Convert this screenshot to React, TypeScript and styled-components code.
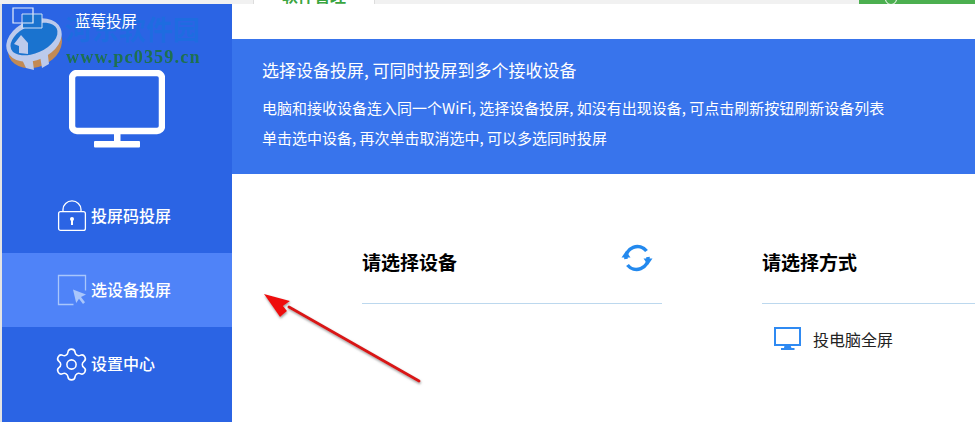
import React from "react";
import styled, { createGlobalStyle } from "styled-components";
import { Settings } from "lucide-react";

const GlobalStyle = createGlobalStyle`
  html, body {
    margin: 0;
    padding: 0;
    background: #fff;
    font-family: "Noto Sans CJK SC", "Noto Sans", sans-serif;
  }
`;

const navItems = [
  { key: "code", label: "投屏码投屏" },
  { key: "device", label: "选设备投屏", active: true },
  { key: "settings", label: "设置中心" },
];

const App: React.FC = () => {
  return (
    <Shell>
      <GlobalStyle />
      <TopStrip>
        <StripTab>
          <StripTabText>软件管理</StripTabText>
        </StripTab>
        <StripSpacer />
        <StripButton>
          <StripDot />
        </StripButton>
      </TopStrip>

      <Body>
        <Sidebar>
          <AppTitle>蓝莓投屏</AppTitle>
          <MonitorWrap>
            <svg width="96" height="78" viewBox="0 0 96 78" fill="none">
              <rect x="3" y="3" width="90" height="58" rx="5" stroke="#fff" strokeWidth="6.5" />
              <rect x="45" y="63" width="6.5" height="8" fill="#fff" />
              <rect x="25" y="71" width="46" height="6.5" rx="1" fill="#fff" />
            </svg>
          </MonitorWrap>
          <Nav>
            {navItems.map(item => (
              <NavItem key={item.key} $active={item.active}>
                <NavIcon>
                  {item.key === "code" && <LockIcon />}
                  {item.key === "device" && <PickIcon />}
                  {item.key === "settings" && <Settings size={37} strokeWidth={1} color="#fff" />}
                </NavIcon>
                <NavLabel>{item.label}</NavLabel>
              </NavItem>
            ))}
          </Nav>
        </Sidebar>

        <Main>
          <Banner>
            <BannerTitle>选择设备投屏, 可同时投屏到多个接收设备</BannerTitle>
            <BannerLine>电脑和接收设备连入同一个WiFi, 选择设备投屏, 如没有出现设备, 可点击刷新按钮刷新设备列表</BannerLine>
            <BannerLine>单击选中设备, 再次单击取消选中, 可以多选同时投屏</BannerLine>
          </Banner>

          <Columns>
            <Column>
              <ColumnHead>
                <ColumnTitle>请选择设备</ColumnTitle>
                <RefreshWrap>
                  <RefreshIcon />
                </RefreshWrap>
              </ColumnHead>
            </Column>
            <Column>
              <ColumnHead>
                <ColumnTitle>请选择方式</ColumnTitle>
              </ColumnHead>
              <Option>
                <svg width="28" height="24" viewBox="0 0 28 24" fill="none">
                  <rect x="1" y="1" width="25" height="17" stroke="#2f8af2" strokeWidth="2" />
                  <path d="M10.5 18.5h6l1 2.6h3v1.9H7v-1.9h3z" fill="#2f8af2" />
                </svg>
                <OptionLabel>投电脑全屏</OptionLabel>
              </Option>
            </Column>
          </Columns>
        </Main>
      </Body>

      <WatermarkLogo />
      <WatermarkName>河东软件园</WatermarkName>
      <WatermarkUrl>www.pc0359.cn</WatermarkUrl>
      <RedArrow />
    </Shell>
  );
};

export default App;

const LockIcon = () => (
  <svg width="30" height="32" viewBox="0 0 30 32" fill="none" stroke="#fff" strokeWidth="1.3">
    <rect x="1.6" y="11.6" width="26.8" height="18.8" rx="2" />
    <path d="M6 11.5V9.5a9 8.6 0 0 1 18 0v2" />
    <circle cx="15" cy="19" r="2" fill="#fff" stroke="none" />
    <rect x="14" y="19" width="2" height="6" fill="#fff" stroke="none" />
  </svg>
);

const PickIcon = () => (
  <svg width="30" height="32" viewBox="0 0 30 32" fill="none">
    <path d="M16.5 30.5H1.5V1.5h27v15" stroke="#a9c6fb" strokeWidth="1.3" />
    <path d="M16 15.5l13 5-5 2.6 4 5.2-2 1.6-4-5.2-2.8 4.4z" fill="#a9c6fb" />
  </svg>
);

const RefreshIcon = () => (
  <svg width="32" height="28" viewBox="0 0 32 28" fill="none">
    <path d="M5 15A11.5 11.5 0 0 1 25.5 7" stroke="#2389ee" strokeWidth="3.6" />
    <path d="M27 13A11.5 11.5 0 0 1 6.5 21" stroke="#2389ee" strokeWidth="3.6" />
    <path d="M0.5 13.5h9L5 7z" fill="#2389ee" />
    <path d="M22.5 14.5h9L27 21z" fill="#2389ee" />
  </svg>
);

const WatermarkLogo = () => (
  <LogoSvg width="70" height="70" viewBox="0 0 70 70" fill="none">
    <ellipse cx="35" cy="42" rx="28" ry="21" transform="rotate(-24 35 42)" fill="#c28a55" />
    <path d="M18 47l8 17 8 2-3-22zM38 40l4 24 7-4-3-24z" fill="#bccaec" />
    <ellipse cx="34" cy="36" rx="29" ry="20" transform="rotate(-24 34 36)" fill="#bccaec" />
    <ellipse cx="34" cy="35" rx="25" ry="14" transform="rotate(-24 34 35)" fill="#1a73cf" />
    <path d="M23 10h19v15h-5v22H28V24h-5z" fill="#1a73cf" />
    <path d="M14 40l7-9 7 8v11l-9-1v-7z" fill="#bccaec" />
    <path d="M13 4h20v15H13z" stroke="#e8eefb" strokeWidth="1.2" />
    <path d="M22 10h20v14H22z" stroke="#cfe0f7" strokeWidth="1" />
  </LogoSvg>
);

const RedArrow = () => (
  <ArrowSvg width="170" height="100" viewBox="0 0 170 100" fill="none">
    <defs>
      <filter id="arrowShadow" x="-10%" y="-10%" width="120%" height="130%">
        <feDropShadow dx="0.5" dy="1.5" stdDeviation="1" floodColor="#777" floodOpacity="0.75" />
      </filter>
    </defs>
    <g filter="url(#arrowShadow)">
      <path d="M28 14L158 88" stroke="#d91414" strokeWidth="3" strokeLinecap="round" />
      <path d="M3 1L29 8 22 13 26 18 19 24z" fill="#ee0d0d" />
    </g>
  </ArrowSvg>
);

const Shell = styled.div`
  position: relative;
  width: 975px;
  height: 422px;
  overflow: hidden;
  background: #fff;
`;

const TopStrip = styled.div`
  display: flex;
  height: 4px;
  padding-left: 253px;
  background: #f1f1f1;
  overflow: hidden;
`;

const StripTab = styled.div`
  width: 122px;
  height: 4px;
  padding-left: 28px;
  box-sizing: border-box;
  background: #fff;
  border-left: 1px solid #ddd;
  border-right: 1px solid #ddd;
  overflow: hidden;
`;

const StripTabText = styled.div`
  margin-top: -15px;
  color: #3aa53f;
  font-size: 16px;
  font-weight: 700;
  line-height: 20px;
`;

const StripSpacer = styled.div`
  flex: 1;
`;

const StripButton = styled.div`
  width: 116px;
  height: 4px;
  padding-left: 26px;
  box-sizing: border-box;
  background: #4caf50;
  overflow: hidden;
`;

const StripDot = styled.div`
  width: 10px;
  height: 10px;
  margin-top: -7px;
  border: 1.5px solid #fff;
  border-radius: 50%;
`;

const Body = styled.div`
  display: flex;
  height: 418px;
  padding-left: 2px;
  background: linear-gradient(to right, #e4e4e4 2px, #fff 2px);
`;

const Sidebar = styled.aside`
  flex: 0 0 230px;
  background: #2b64e4;
`;

const AppTitle = styled.div`
  position: relative;
  z-index: 2;
  padding-left: 73px;
  color: #fff;
  font-size: 15.5px;
  line-height: 32px;
`;

const MonitorWrap = styled.div`
  display: flex;
  justify-content: center;
  margin-top: 34px;
`;

const Nav = styled.nav`
  margin-top: 31px;
`;

const NavItem = styled.div<{ $active?: boolean }>`
  display: flex;
  align-items: center;
  height: 74px;
  padding-left: 50px;
  background: ${p => (p.$active ? "#4f83f8" : "transparent")};
`;

const NavIcon = styled.div`
  display: flex;
  justify-content: center;
  align-items: center;
  width: 39px;
`;

const NavLabel = styled.span`
  margin-bottom: 2px;
  color: #fff;
  font-size: 16px;
  font-weight: 500;
`;

const Main = styled.main`
  flex: 1;
  min-width: 0;
  padding-top: 35px;
`;

const Banner = styled.section`
  height: 135px;
  box-sizing: border-box;
  padding: 17px 0 0 30px;
  background: #3874ec;
  color: #fff;
`;

const BannerTitle = styled.div`
  margin-bottom: 10px;
  font-size: 17px;
  line-height: 27px;
  white-space: nowrap;
`;

const BannerLine = styled.div`
  font-size: 15px;
  line-height: 30px;
  white-space: nowrap;
`;

const Columns = styled.div`
  display: flex;
  gap: 100px;
  padding: 62px 0 0 130px;
`;

const Column = styled.div`
  flex: 0 0 300px;
`;

const ColumnHead = styled.div`
  display: flex;
  justify-content: space-between;
  align-items: flex-start;
  height: 67px;
  padding-right: 9px;
  border-bottom: 1px solid #bcd8ee;
`;

const ColumnTitle = styled.h2`
  margin: 11px 0 0;
  color: #000;
  font-size: 19px;
  font-weight: 700;
  line-height: 30px;
`;

const RefreshWrap = styled.div`
  display: flex;
  margin-top: 8px;
`;

const Option = styled.div`
  display: flex;
  align-items: center;
  gap: 11px;
  margin-top: 23px;
  padding-left: 12px;
`;

const OptionLabel = styled.span`
  color: #222;
  font-size: 16px;
`;

const LogoSvg = styled.svg`
  position: absolute;
  left: 0;
  top: 4px;
`;

const WatermarkName = styled.div`
  position: absolute;
  left: 65px;
  top: 11px;
  color: #1c6fe0;
  font-size: 27px;
  font-weight: 700;
  line-height: 36px;
  opacity: 0.8;
  filter: blur(0.6px);
`;

const WatermarkUrl = styled.div`
  position: absolute;
  left: 66px;
  top: 46px;
  color: #1e7050;
  font-family: "Liberation Serif", serif;
  font-size: 18px;
  font-weight: 700;
  line-height: 22px;
  letter-spacing: 1.2px;
  filter: blur(0.3px);
`;

const ArrowSvg = styled.svg`
  position: absolute;
  left: 261px;
  top: 293px;
`;
